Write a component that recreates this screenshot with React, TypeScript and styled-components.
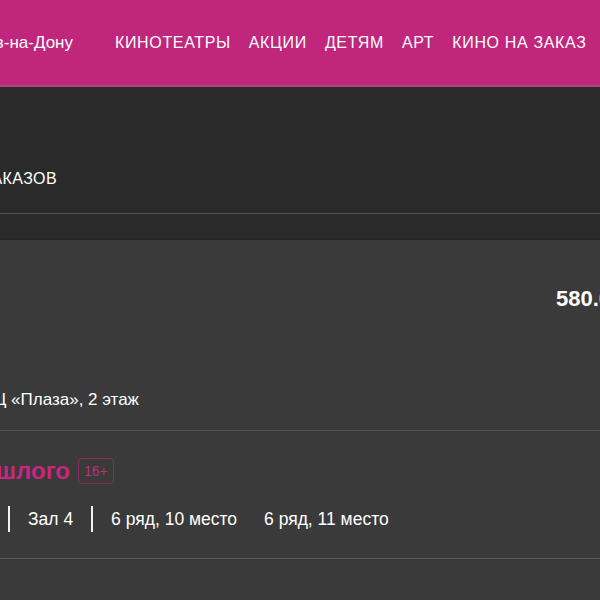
import styled, { createGlobalStyle } from 'styled-components'

const GlobalStyle = createGlobalStyle`
  html, body {
    margin: 0;
    padding: 0;
    overflow: hidden;
    background: #2a2a2a;
    font-family: 'Liberation Sans', Arial, sans-serif;
    color: #ffffff;
  }
`

const navItems = ['Кинотеатры', 'Акции', 'Детям', 'Арт', 'Кино на заказ']

const seats = ['6 ряд, 10 место', '6 ряд, 11 место']

export default function App() {
  return (
    <Page>
      <GlobalStyle />
      <Header>
        <Clip $w={73}>
          <City>Ростов-на-Дону</City>
        </Clip>
        <Nav>
          {navItems.map((item) => (
            <NavLink key={item}>{item}</NavLink>
          ))}
        </Nav>
      </Header>

      <SubNav>
        <Clip $w={57}>
          <Tab>История заказов</Tab>
        </Clip>
      </SubNav>

      <OrderCard>
        <OrderHead>
          <OrderInfo>
            <Clip $w={139}>
              <Place>ТРЦ «Плаза», 2 этаж</Place>
            </Clip>
          </OrderInfo>
          <Price>580.00 ₽</Price>
        </OrderHead>

        <FilmBlock>
          <TitleRow>
            <Clip $w={70}>
              <FilmTitle>Гости из прошлого</FilmTitle>
            </Clip>
            <AgeBadge>16+</AgeBadge>
          </TitleRow>
          <SeatsRow>
            <Lead>19 мая, 18:40</Lead>
            <Divider />
            <SeatText>Зал 4</SeatText>
            <Divider />
            <SeatList>
              {seats.map((seat) => (
                <SeatText key={seat}>{seat}</SeatText>
              ))}
            </SeatList>
          </SeatsRow>
        </FilmBlock>
        <CardRest />
      </OrderCard>
    </Page>
  )
}

const Page = styled.div`
  width: 600px;
  height: 600px;
  overflow: hidden;
  display: flex;
  flex-direction: column;
`

const Clip = styled.div<{ $w: number }>`
  flex-shrink: 0;
  width: ${(p) => p.$w}px;
  display: flex;
  justify-content: flex-end;
  white-space: nowrap;
`

const Header = styled.header`
  height: 85px;
  flex-shrink: 0;
  background: #c1267d;
  border-bottom: 2px solid #a7467f;
  display: flex;
  align-items: center;
`

const City = styled.span`
  font-size: 17px;
  color: #ffffff;
`

const Nav = styled.nav`
  display: flex;
  align-items: center;
  gap: 18px;
  margin-left: 42px;
  white-space: nowrap;
`

const NavLink = styled.a`
  font-size: 16px;
  text-transform: uppercase;
  letter-spacing: 0.65px;
  color: #ffffff;
  cursor: pointer;
`

const SubNav = styled.div`
  height: 126px;
  flex-shrink: 0;
  border-bottom: 1px solid #545454;
  display: flex;
  align-items: flex-end;
`

const Tab = styled.span`
  font-size: 16px;
  line-height: 20px;
  padding-bottom: 24px;
  text-transform: uppercase;
  letter-spacing: 0.4px;
  color: #ffffff;
`

const OrderCard = styled.section`
  margin-top: 25px;
  flex: 1;
  background: #3a3a3a;
  border-top: 1px solid #262626;
  display: flex;
  flex-direction: column;
`

const OrderHead = styled.div`
  display: flex;
  padding: 46px 0 19px;
  border-bottom: 1px solid #555555;
`

const OrderInfo = styled.div`
  flex: 0 0 556px;
  min-height: 125px;
  display: flex;
  flex-direction: column;
  justify-content: flex-end;
`

const Place = styled.span`
  font-size: 17px;
  line-height: 22px;
`

const Price = styled.div`
  flex-shrink: 0;
  font-size: 22px;
  line-height: 26px;
  font-weight: bold;
  white-space: nowrap;
`

const FilmBlock = styled.div`
  padding: 25px 0 26px;
  border-bottom: 1px solid #5a5a5a;
  display: flex;
  flex-direction: column;
  gap: 20px;
`

const TitleRow = styled.div`
  display: flex;
  align-items: center;
  gap: 8px;
  height: 30px;
`

const FilmTitle = styled.span`
  font-size: 24px;
  line-height: 30px;
  font-weight: bold;
  color: #c8277f;
`

const AgeBadge = styled.span`
  box-sizing: border-box;
  height: 26px;
  padding: 0 5px;
  border: 1px solid #8a2d66;
  border-radius: 4px;
  font-size: 14px;
  line-height: 24px;
  color: #bb2f7d;
`

const SeatsRow = styled.div`
  display: flex;
  align-items: center;
  gap: 18px;
  height: 26px;
`

const Lead = styled.span`
  flex: 0 0 0;
  width: 0;
  margin-left: -10px;
  display: flex;
  justify-content: flex-end;
  white-space: nowrap;
  font-size: 17.5px;
`

const Divider = styled.span`
  flex-shrink: 0;
  width: 2px;
  height: 26px;
  background: #f2f2f2;
`

const SeatList = styled.div`
  display: flex;
  gap: 27px;
`

const SeatText = styled.span`
  font-size: 17.5px;
  line-height: 22px;
  white-space: nowrap;
`

const CardRest = styled.div`
  flex: 1;
`
